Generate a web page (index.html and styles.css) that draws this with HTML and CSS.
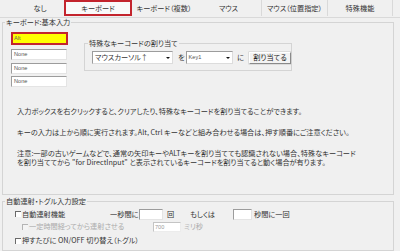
FILE: index.html
```html
<!DOCTYPE html>
<html lang="ja">
<head>
<meta charset="utf-8">
<link rel="stylesheet" href="styles.css">
</head>
<body>
<div class="tabs">
  <div class="tab t1">なし</div>
  <div class="tab sel">キーボード</div>
  <div class="tab t3">キーボード（複数）</div>
  <div class="tab t4">マウス</div>
  <div class="tab t5">マウス（位置指定）</div>
  <div class="tab t6">特殊機能</div>
</div>

<fieldset class="group g1">
  <legend>キーボード:基本入力</legend>
  <div class="top">
    <div class="keys">
      <div class="kbox alt">Alt</div>
      <div class="kbox">None</div>
      <div class="kbox">None</div>
      <div class="kbox">None</div>
    </div>
    <fieldset class="special">
      <legend>特殊なキーコードの割り当て</legend>
      <div class="assign">
        <div class="select s1"><span class="val">マウスカーソル↑</span><i class="arrow"></i></div>
        <span class="conj c1">を</span>
        <div class="select s2"><span class="val lat">Key1</span><i class="arrow"></i></div>
        <span class="conj c2">に</span>
        <button class="btn">割り当てる</button>
      </div>
    </fieldset>
  </div>
  <p class="note n1">入力ボックスを右クリックすると、クリアしたり、特殊なキーコードを割り当てることができます。</p>
  <p class="note">キーの入力は上から順に実行されます。Alt, Ctrl キーなどと組み合わせる場合は、押す順番にご注意ください。</p>
  <p class="note">注意:一部の古いゲームなどで、通常の矢印キーやALTキーを割り当てても認識されない場合、特殊なキーコード<br>を割り当ててから "for DirectInput" と表示されているキーコードを割り当てると動く場合が有ります。</p>
</fieldset>

<fieldset class="group g2">
  <legend>自動連射・トグル入力設定</legend>
  <div class="row r1">
    <span class="cb"></span><span class="lab-a">自動連射機能</span>
    <span class="lab-b">一秒間に</span>
    <span class="field f1"></span>
    <span class="lab-c">回</span>
    <span class="lab-d">もしくは</span>
    <span class="field f2"></span>
    <span class="lab-e">秒間に一回</span>
  </div>
  <div class="row r2 disabled">
    <span class="cb"></span><span class="lab-f">一定時間経ってから連射させる</span>
    <span class="field f3">700</span>
    <span class="lab-g">ミリ秒</span>
  </div>
  <div class="row r3">
    <span class="cb"></span><span>押すたびに ON/OFF 切り替え（トグル）</span>
  </div>
</fieldset>
</body>
</html>
```

FILE: styles.css
```css
html, body {
  margin: 0;
  padding: 0;
}
body {
  width: 400px;
  height: 251px;
  overflow: hidden;
  background: #f0f0f0;
  font-family: "Noto Sans CJK JP", "Noto Sans CJK SC", sans-serif;
  font-size: 7.2px;
  line-height: 9px;
  color: #333;
  font-feature-settings: "palt";
}

/* tabs */
.tabs {
  display: flex;
  height: 17px;
  border-bottom: 1px solid #d9d9d9;
  box-sizing: content-box;
}
.tab {
  display: flex;
  align-items: center;
  justify-content: center;
  height: 16px;
  box-sizing: border-box;
  white-space: nowrap;
}
.t1 { margin-left: 16px; width: 48px; }
.sel {
  width: 68px;
  border: 2px solid #c3242d;
  background: #f9f9f9;
}
.t3 { width: 64px; }
.t4 { width: 66px; border-right: 1px solid #d9d9d9; }
.t5 { width: 66px; border-right: 1px solid #d9d9d9; }
.t6 { width: 65px; border-right: 1px solid #d9d9d9; }

/* group boxes */
fieldset {
  min-width: 0;
  margin: 0;
  border: 1px solid #d4d4d4;
  box-sizing: border-box;
}
legend {
  padding: 0 1px;
  line-height: 9px;
}
.g1 {
  margin: 0 6px 0 2px;
  padding: 5px 0 27px 8px;
}
.g1 > legend { margin-left: -6px; }

.top {
  display: flex;
  align-items: flex-start;
}
.keys {
  display: flex;
  flex-direction: column;
  width: 57px;
}
.kbox {
  width: 56px;
  height: 11px;
  box-sizing: border-box;
  margin-top: 2.5px;
  padding-left: 2px;
  background: #fff;
  border: 1px solid;
  border-color: #9c9c9c #e4e4e4 #e4e4e4 #9c9c9c;
  font-family: "Liberation Sans", sans-serif;
  font-size: 5.6px;
  line-height: 9px;
  color: #555;
}
.kbox.alt {
  width: 57px;
  height: 13px;
  margin-top: 0;
  margin-bottom: 1.5px;
  border: 2px solid #c3242d;
  background: #ffff00;
  line-height: 9px;
  padding-left: 1px;
  color: #666;
}

.special {
  width: 208px;
  margin: 7px 0 0 16px;
  padding: 3px 0 6px 7px;
}
.special > legend { margin-left: -4px; }
.assign {
  display: flex;
  align-items: center;
  height: 13px;
}
.select {
  display: flex;
  height: 13px;
  box-sizing: border-box;
  background: #fff;
  border: 1px solid;
  border-color: #9c9c9c #dcdcdc #dcdcdc #9c9c9c;
}
.s1 { width: 81px; }
.s2 { width: 47px; }
.select .val {
  flex: 1;
  padding-left: 2px;
  line-height: 11px;
  white-space: nowrap;
  overflow: hidden;
}
.select .lat {
  font-family: "Liberation Sans", sans-serif;
  font-size: 5.6px;
  color: #555;
}
.arrow {
  position: relative;
  width: 8px;
  background: #fff;
}
.arrow::after {
  content: "";
  position: absolute;
  left: 2px;
  top: 5px;
  border-left: 2px solid transparent;
  border-right: 2px solid transparent;
  border-top: 2px solid #111;
}
.conj { white-space: nowrap; }
.c1 { margin: 0 1px 0 5px; }
.c2 { margin: 0 5px 0 4.5px; }
.btn {
  width: 42px;
  height: 12px;
  padding: 0;
  margin: 0;
  box-sizing: border-box;
  font: inherit;
  line-height: 9px;
  color: #222;
  background: #f3f3f3;
  border: 1px solid;
  border-color: #ffffff #8a8a8a #8a8a8a #ffffff;
  box-shadow: 0 0 0 0.5px #c8c8c8;
}

.note {
  margin: 12px 0 0 6px;
  white-space: nowrap;
}
.note.n1 { margin-top: 19.5px; }

/* group 2 */
.g2 {
  margin: 2.5px 6px 0 2px;
  padding: 2.5px 0 5px 12px;
}
.g2 > legend { margin-left: -10px; }
.row {
  display: flex;
  align-items: center;
  white-space: nowrap;
}
.r1 { height: 11px; }
.r2 { height: 10px; margin-top: 2px; padding-left: 7px; }
.r3 { height: 9px; margin-top: 4.5px; }
.cb {
  width: 5px;
  height: 5px;
  flex: none;
  background: #fff;
  border-top: 1px solid #6a6a6a;
  border-left: 1px solid #6a6a6a;
  margin-right: 1px;
}
.disabled { color: #ababab; }
.disabled .cb {
  border-color: #b4b4b4;
  background: #f4f4f4;
}
.lab-a { width: 88px; }
.lab-b { width: 29px; }
.lab-c { width: 27px; padding-left: 4px; box-sizing: border-box; }
.lab-d { width: 43px; }
.lab-e { margin-left: 2px; }
.lab-f { width: 124px; }
.lab-g { margin-left: 3px; }
.field {
  height: 11px;
  box-sizing: border-box;
  background: #fff;
  border: 1px solid;
  border-color: #9c9c9c #e4e4e4 #e4e4e4 #9c9c9c;
}
.f1 { width: 24px; }
.f2 { width: 19px; }
.f3 {
  width: 28px;
  height: 10px;
  border-color: #c4c4c4 #ececec #ececec #c4c4c4;
  font-family: "Liberation Sans", sans-serif;
  font-size: 5.6px;
  line-height: 8px;
  padding-left: 1px;
  color: #9a9a9a;
}
```
